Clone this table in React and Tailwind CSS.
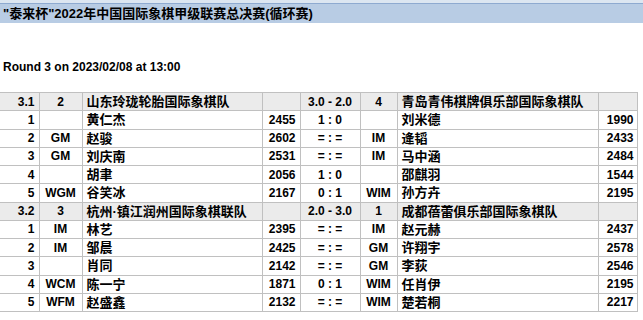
import React from "react";

const font = { fontFamily: '"Liberation Sans", Arial, "Noto Sans CJK SC", sans-serif' };

const groups = [
  {
    head: ["3.1", "2", "山东玲珑轮胎国际象棋队", "", "3.0 - 2.0", "4", "青岛青伟棋牌俱乐部国际象棋队", ""],
    rows: [
      ["1", "", "黄仁杰", "2455", "1 : 0", "", "刘米德", "1990"],
      ["2", "GM", "赵骏", "2602", "= : =", "IM", "逄韬", "2433"],
      ["3", "GM", "刘庆南", "2531", "= : =", "IM", "马中涵", "2484"],
      ["4", "", "胡聿", "2056", "1 : 0", "", "邵麒羽", "1544"],
      ["5", "WGM", "谷笑冰", "2167", "0 : 1", "WIM", "孙方卉", "2195"],
    ],
  },
  {
    head: ["3.2", "3", "杭州·镇江润州国际象棋联队", "", "2.0 - 3.0", "1", "成都蓓蕾俱乐部国际象棋队", ""],
    rows: [
      ["1", "IM", "林艺", "2395", "= : =", "IM", "赵元赫", "2437"],
      ["2", "IM", "邹晨", "2425", "= : =", "GM", "许翔宇", "2578"],
      ["3", "", "肖同", "2142", "= : =", "GM", "李荻", "2546"],
      ["4", "WCM", "陈一宁", "1871", "0 : 1", "WIM", "任肖伊", "2195"],
      ["5", "WFM", "赵盛鑫", "2132", "= : =", "WIM", "楚若桐", "2217"],
    ],
  },
];

const widths = ["w-[39px]", "w-[43px]", "w-[180px]", "w-[38px]", "w-[60px]", "w-[37px]", "w-[201px]", "w-[39px]"];
const aligns = [
  "text-right pr-[4px]",
  "text-center",
  "text-left pl-[4px] text-[13px]",
  "text-right pr-[4px]",
  "text-center",
  "text-center",
  "text-left pl-[4px] text-[13px]",
  "text-right pr-[3px]",
];

function Row({ cells, head }) {
  return (
    <tr className={head ? "bg-[#ebebeb]" : "bg-white"}>
      {cells.map((c, i) => (
        <td
          key={i}
          className={`${widths[i]} ${aligns[i]} border border-[#c0c0c0] h-[18.25px] p-0 leading-none whitespace-nowrap ${i === 0 ? "border-l-0" : ""}`}
        >
          {c}
        </td>
      ))}
    </tr>
  );
}

export default function App() {
  return (
    <div className="w-[643px] h-[320px] bg-white text-black overflow-hidden font-bold" style={font}>
      <div className="h-[3px] bg-[#dce6f1]" />
      <div className="h-[20px] bg-[#b8cce4] border-t border-[#8eaad0] flex items-center pl-[3px] text-[13px]">
        "泰来杯"2022年中国国际象棋甲级联赛总决赛(循环赛)
      </div>
      <div className="h-[68px] flex items-end pb-[15px] pl-[3px] text-[12px]">
        Round 3 on 2023/02/08 at 13:00
      </div>
      <table className="border-collapse text-[12px] table-fixed w-[637px] mt-[1px]">
        <tbody>
          {groups.map((g, gi) => (
            <React.Fragment key={gi}>
              <Row cells={g.head} head />
              {g.rows.map((r, ri) => (
                <Row key={ri} cells={r} />
              ))}
            </React.Fragment>
          ))}
        </tbody>
      </table>
    </div>
  );
}
